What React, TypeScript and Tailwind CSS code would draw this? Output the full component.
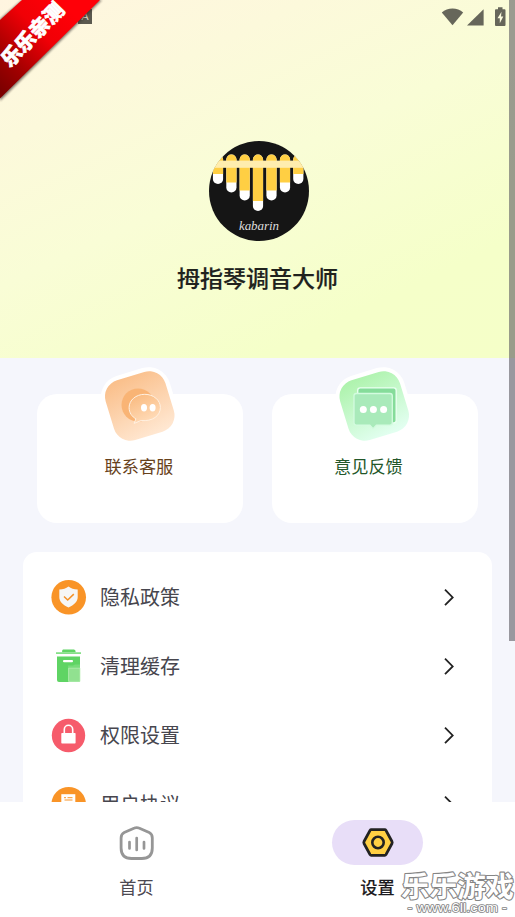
import React from 'react';

const fontClass = "font-['Noto_Sans_CJK_SC',sans-serif]";

const StatusBar: React.FC = () => (
  <div className="absolute inset-x-0 top-0 h-8">
    <div className="absolute left-[78px] top-[9px] flex h-[15px] w-[14px] items-center justify-center bg-[#5b594f] text-[11px] leading-none text-[#ddd9c9] font-['Liberation_Sans',sans-serif]">
      A
    </div>
    <svg className="absolute left-[440px] top-0" width="70" height="32" viewBox="0 0 70 32" fill="#66665a">
      <path d="M1.8 12.5C7.5 7.2 17.500 7.200 23.200 12.500L12.500 25.200Z" />
      <path d="M43.600 9.300V25.600H27Z" />
      <path d="M58 7.300h4.500v2h2.100q.9 0 .9.900v14.900q0 .9-.9.900h-8.700q-.9 0-.9-.9v-14.900q0-.9.900-.9h2.100Z" />
      <path d="M61.500 11.800L57.500 18.300h2.300v5l3.500-6.800H61Z" fill="#fbfbdd" />
    </svg>
  </div>
);

const Ribbon: React.FC = () => (
  <div className="absolute left-0 top-0 h-[104px] w-[106px]">
    <svg width="106" height="104" viewBox="0 0 106 104">
      <defs>
        <linearGradient id="ribbon" gradientUnits="userSpaceOnUse" x1="0" y1="90" x2="75" y2="15">
          <stop offset="0" stopColor="#7c0000" />
          <stop offset="0.25" stopColor="#a00000" />
          <stop offset="0.65" stopColor="#f00006" />
          <stop offset="1" stopColor="#ff0008" />
        </linearGradient>
        <filter id="soft">
          <feGaussianBlur stdDeviation="1.3" />
        </filter>
      </defs>
      <path d="M22 0H102L0 101V19Z" fill="#302c28" opacity="0.6" filter="url(#soft)" />
      <path d="M22 0H100L0 98.500V20Z" fill="url(#ribbon)" />
    </svg>
    <span className="absolute left-[-12px] top-[20px] w-[88px] -rotate-[46deg] whitespace-nowrap text-center text-[20px] font-black leading-[28px] text-white [-webkit-text-stroke:0.7px_white]">
      乐乐亲测
    </span>
  </div>
);

// x, bottom of the white tip, top of the white tip
const tines = [
  [18, 49, 39],
  [31.4, 57.500, 47.500],
  [44.700, 65.500, 55.500],
  [58, 76, 66],
  [71.500, 65.500, 55.500],
  [85, 57.500, 47.500],
  [98.300, 49, 39],
];

const Logo: React.FC = () => (
  <div className="relative mt-[141px] ml-[3px] size-[100px] overflow-hidden rounded-full bg-[#151515]">
    <svg width="100" height="100" viewBox="9 6 100 100">
      {tines.map(([x, bottom, tip]) => (
        <g key={x}>
          <rect x={x - 5.1} y="19.500" width="10.200" height={bottom - 19.5} rx="5.100" fill="#fff" />
          <path d={`M${x - 5.1} ${tip}V24.600a5.100 5.100 0 0 1 10.200 0V${tip}Z`} fill="#ffcf43" />
        </g>
      ))}
      <rect x="9" y="25.600" width="100" height="7.200" fill="#ffedae" />
    </svg>
    <span className="absolute inset-x-0 top-[77px] text-center text-[13px] italic leading-[15px] tracking-[-0.05px] text-[#dedede] font-['Liberation_Serif',serif]">
      kabarin
    </span>
  </div>
);

const ServiceIcon: React.FC = () => (
  <svg width="90" height="90" viewBox="95 360 90 90">
    <defs>
      <linearGradient id="orangeTile" x1="0.4" y1="0" x2="0.6" y2="1">
        <stop offset="0" stopColor="#fac08c" />
        <stop offset="1" stopColor="#ffe7d1" />
      </linearGradient>
      <linearGradient id="orangeBubble" x1="0" y1="0" x2="0.5" y2="1">
        <stop offset="0" stopColor="#f9b77a" />
        <stop offset="1" stopColor="#ffdbb8" />
      </linearGradient>
    </defs>
    <rect x="104.250" y="370.500" width="71" height="71" rx="22" transform="rotate(-17 139.750 406)" fill="#fff" />
    <rect x="108.500" y="374.750" width="62.500" height="62.500" rx="17" transform="rotate(-17 139.750 406)" fill="url(#orangeTile)" />
    <circle cx="138" cy="405" r="16.500" fill="#f9b475" />
    <path d="M144.800 394.300c-8.800 0-15.700 5.900-15.700 13.200 0 5.300 2.900 9.200 6.800 11.300l-1.800 4.600 7-2.900c11.400 1.200 19.300-4.800 19.300-13 0-7.300-6.900-13.200-15.600-13.200Z" fill="url(#orangeBubble)" stroke="#fff1e2" strokeWidth="1" />
    <ellipse cx="144" cy="407.700" rx="3" ry="3.700" fill="#fff" />
    <ellipse cx="152.600" cy="407.700" rx="3" ry="3.700" fill="#fff" />
  </svg>
);

const FeedbackIcon: React.FC = () => (
  <svg width="90" height="90" viewBox="329 360 90 90">
    <defs>
      <linearGradient id="greenTile" x1="0.4" y1="0" x2="0.6" y2="1">
        <stop offset="0" stopColor="#aff3ae" />
        <stop offset="1" stopColor="#e2fff0" />
      </linearGradient>
    </defs>
    <rect x="338.750" y="370.500" width="71" height="71" rx="22" transform="rotate(-17 374.250 406)" fill="#fff" />
    <rect x="343" y="374.750" width="62.500" height="62.500" rx="17" transform="rotate(-17 374.250 406)" fill="url(#greenTile)" />
    <rect x="357.700" y="387.900" width="38.500" height="35" rx="2.500" fill="#85dc9a" stroke="#e9fff0" strokeWidth="1.400" />
    <path d="M356.300 393.500H390q2.300 0 2.300 2.300v27q0 2.300-2.300 2.300h-13.600l-3.300 3.500-3.300-3.500h-13.500q-2.300 0-2.300-2.300v-27q0-2.300 2.300-2.300Z" fill="#a9eaba" stroke="#d3fbdf" strokeWidth="1.300" />
    <circle cx="363.300" cy="409.500" r="3.500" fill="#fff" />
    <circle cx="373.400" cy="409.500" r="3.500" fill="#fff" />
    <circle cx="383.600" cy="409.500" r="3.500" fill="#fff" />
  </svg>
);

interface ActionCardProps {
  label: string;
  icon: React.ReactNode;
  textClass: string;
  iconClass: string;
}

const ActionCard: React.FC<ActionCardProps> = ({ label, icon, textClass, iconClass }) => (
  <div className="relative h-[129px] w-[206px] rounded-[20px] bg-white">
    <div className={`absolute -top-[34px] ${iconClass}`}>{icon}</div>
    <p className={`pt-[60px] text-[17.200px] leading-6 ${textClass}`}>{label}</p>
  </div>
);

const ShieldIcon: React.FC = () => (
  <svg width="36" height="36" viewBox="0 0 36 36">
    <circle cx="17.700" cy="18.300" r="17.300" fill="#f99427" />
    <path d="M17.500 7.600c2.500 2 5.400 2.700 9.200 3v7.500c0 4.700-3.600 8.200-9.200 10.300-5.600-2.100-9.200-5.600-9.200-10.300v-7.500c3.800-.3 6.700-1 9.200-3Z" fill="#f6f6f6" />
    <path d="M13 17.500l3.700 3.500 6.100-5.900" fill="none" stroke="#f49128" strokeWidth="1.500" />
  </svg>
);

const BinIcon: React.FC = () => (
  <svg width="36" height="36" viewBox="0 0 36 36">
    <path d="M12 2h11q1.700 0 1.700 2.800H11Q11 2 12 2Z" transform="translate(0 -0.500)" fill="#5fd464" />
    <rect x="5" y="4.300" width="25" height="1.600" fill="#78dd7b" />
    <path d="M6 8.500h23v23.500q0 2-2 2H8q-2 0-2-2Z" fill="#5fd464" />
    <rect x="12" y="12" width="10" height="2.300" rx="1" fill="#fff" />
    <path d="M17 17.600h5l2-1h5v17.200H17Z" fill="#77dc7a" />
    <path d="M17.600 20.200H29v13.200H17.600Z" fill="#91e190" stroke="#bcefb8" strokeWidth="0.700" />
  </svg>
);

const LockIcon: React.FC = () => (
  <svg width="36" height="36" viewBox="0 0 36 36">
    <circle cx="17.500" cy="18.500" r="16.700" fill="#f65b6b" />
    <rect x="10.300" y="16" width="14.300" height="10.500" rx="0.700" fill="#fff" />
    <path d="M13.300 16.500v-4a4.200 4.200 0 0 1 8.400 0v4" fill="none" stroke="#fff" strokeWidth="1.600" />
  </svg>
);

const AgreementIcon: React.FC = () => (
  <svg width="36" height="36" viewBox="0 0 36 36">
    <circle cx="17.700" cy="18.300" r="17.300" fill="#f99427" />
    <rect x="10.300" y="8.200" width="14" height="18" fill="#fff" />
    <path d="M13 11.700h2M16.500 11.700h5M13.500 14h8" stroke="#f99427" strokeWidth="1" />
  </svg>
);

const rows = [
  { label: '隐私政策', icon: <ShieldIcon /> },
  { label: '清理缓存', icon: <BinIcon /> },
  { label: '权限设置', icon: <LockIcon /> },
  { label: '用户协议', icon: <AgreementIcon /> },
];

const SettingsRow: React.FC<{ label: string; icon: React.ReactNode }> = ({ label, icon }) => (
  <div className="flex h-[69px] shrink-0 items-center pl-[28px] pr-[36px]">
    {icon}
    <span className="ml-[13px] text-[20px] leading-7 text-[#47464e]">{label}</span>
    <svg className="ml-auto" width="13" height="20" viewBox="0 0 13 20" fill="none" stroke="#222" strokeWidth="1.800">
      <path d="M2 2.600L9.700 10.400 2 18.200" />
    </svg>
  </div>
);

const BottomNav: React.FC = () => (
  <nav className="relative flex h-[115px] bg-white">
    <div className="flex w-[273px] flex-col items-center pt-[18px]">
      <svg className="h-[46px] w-[46px]" viewBox="114 820 46 46" fill="none" stroke="#969696">
        <path d="M134.500 828.100Q136.700 827 138.900 828.100L149.200 832.500Q152.300 834 152.300 838V848Q152.300 858.500 141.800 858.500H131.600Q121.100 858.500 121.100 848V838Q121.100 834 124.200 832.500Z" strokeWidth="2.800" />
        <path d="M129.500 842v6.500M136.700 838v12M144 842v6.500" strokeWidth="2.700" strokeLinecap="round" />
      </svg>
      <span className="mt-[9px] text-[17.200px] leading-6 text-[#4c4952]">首页</span>
    </div>
    <div className="flex w-[209px] flex-col items-center pt-[18px]">
      <div className="flex h-[45px] w-[91px] items-center justify-center rounded-full bg-[#e8def8]">
        <svg width="34" height="34" viewBox="0 0 34 34" stroke="#222" strokeLinejoin="round">
          <path d="M10.200 3.700H23.800Q24.500 3.700 25 4.500L31 15.500Q31.500 16.500 31 17.500L25 28.500Q24.500 29.300 23.800 29.300H10.200Q9.500 29.300 9 28.500L3 17.500Q2.500 16.500 3 15.500L9 4.500Q9.500 3.700 10.200 3.700Z" fill="#ffcf43" strokeWidth="2.700" />
          <circle cx="17" cy="16.500" r="5.700" fill="#ffcf43" strokeWidth="2.600" />
        </svg>
      </div>
      <span className="mt-[10px] text-[17.200px] font-medium leading-6 text-[#1d1b20] [-webkit-text-stroke:0.1px_#1d1b20]">设置</span>
    </div>
  </nav>
);

const Watermark: React.FC = () => (
  <svg className="absolute left-[400px] top-[868px]" width="115" height="49" viewBox="0 0 115 49">
    <g fill="#fff" stroke="#858585" paintOrder="stroke" strokeLinejoin="round">
      <text x="1" y="28.500" textLength="113" fontSize="28.500" fontWeight="700" strokeWidth="2.200" fontFamily="Noto Sans CJK SC, sans-serif">
        乐乐游戏
      </text>
      <text x="7.500" y="44" textLength="99.500" lengthAdjust="spacingAndGlyphs" fontSize="13" strokeWidth="1.600" fontFamily="Liberation Sans, sans-serif">
        - www.6ll.com -
      </text>
    </g>
  </svg>
);

const App: React.FC = () => {
  return (
    <div className={`relative flex h-[917px] w-[515px] flex-col overflow-hidden bg-[#f5f6fc] ${fontClass}`}>
      <header className="flex h-[358px] shrink-0 flex-col items-center bg-[linear-gradient(155deg,#fff5e0_0%,#f9fdd6_48%,#f5ffc9_80%,#f5ffc8_100%)]">
        <Logo />
        <h1 className="mt-[20px] text-[23px] font-medium leading-8 text-[#20221d] [-webkit-text-stroke:0.2px_#20221d]">拇指琴调音大师</h1>
      </header>

      <main className="flex h-[444px] shrink-0 flex-col overflow-hidden">
        <div className="flex gap-[29px] pl-[37px] pt-[36px]">
          <ActionCard
            label="联系客服"
            icon={<ServiceIcon />}
            iconClass="left-[58px]"
            textClass="pl-[67.500px] text-[#67411b]"
          />
          <ActionCard
            label="意见反馈"
            icon={<FeedbackIcon />}
            iconClass="left-[57px]"
            textClass="pl-[62px] text-[#23572a]"
          />
        </div>
        <div className="ml-[23px] mt-[29px] flex w-[469px] shrink-0 flex-col rounded-t-[14px] bg-white pt-[10px]">
          {rows.map((row) => (
            <SettingsRow key={row.label} label={row.label} icon={row.icon} />
          ))}
        </div>
      </main>

      <BottomNav />
      <StatusBar />
      <Ribbon />
      <Watermark />
      {/* scroll indicator */}
      <div className="absolute right-0 top-0 h-[641px] w-[6px] bg-[#5c5a60]/60" />
    </div>
  );
};

export default App;
